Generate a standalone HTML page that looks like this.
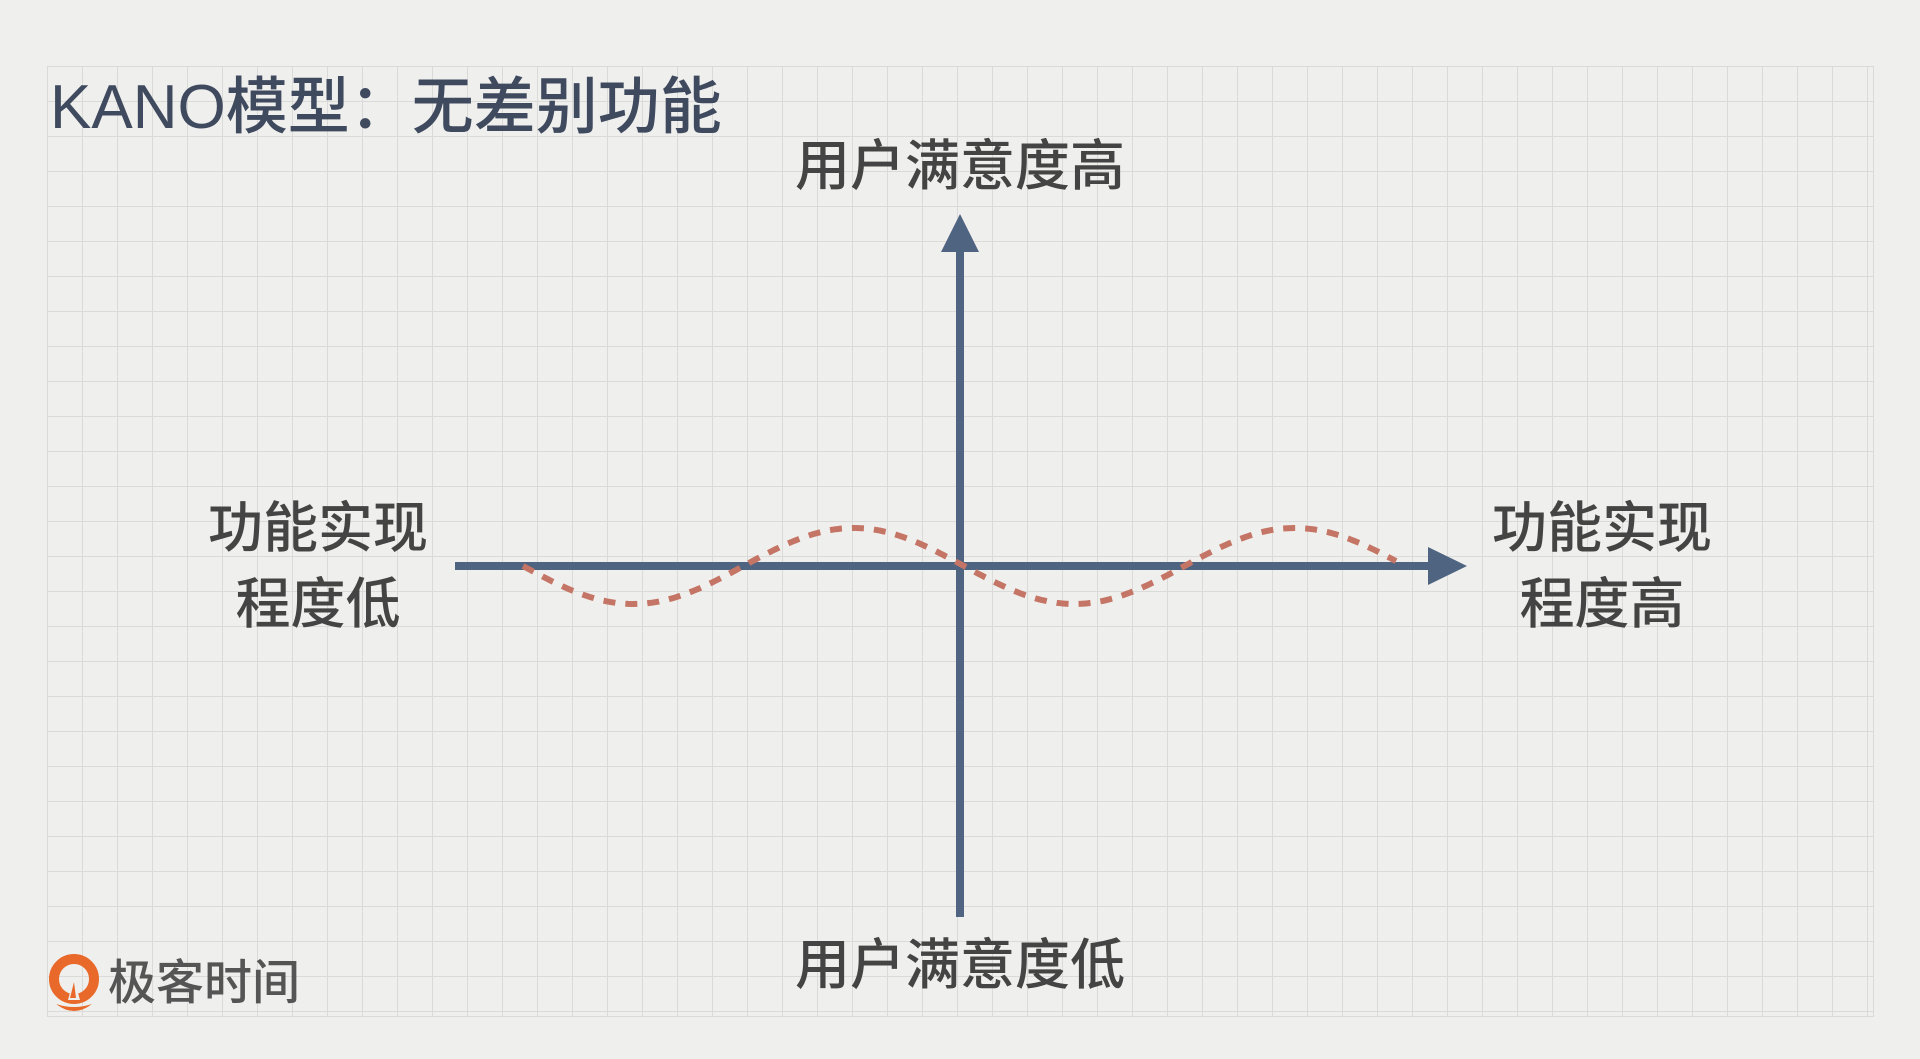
<!DOCTYPE html>
<html><head><meta charset="utf-8"><style>
body{margin:0;width:1920px;height:1059px;background:#efefed;overflow:hidden;position:relative;font-family:"Liberation Sans","Noto Sans CJK SC",sans-serif;}
.grid{position:absolute;left:47px;top:66px;width:1826px;height:950px;
background-image:linear-gradient(to right,#dadad8 1px,transparent 1px),linear-gradient(to bottom,#dadad8 1px,transparent 1px);background-size:35px 35px;border-right:1px solid #dadad8;border-bottom:1px solid #dadad8;}
.t{position:absolute;color:#3f4a5f;white-space:nowrap;}
.lbl{position:absolute;color:#444;font-size:55px;font-weight:500;text-align:center;line-height:76px;white-space:nowrap;}
</style></head><body>
<div class="grid"></div>
<div class="t" style="left:50px;top:66px;font-size:62px;line-height:84px;font-weight:500;">KANO模型：无差别功能</div>
<div class="lbl" style="left:760px;width:400px;top:128px;">用户满意度高</div>
<div class="lbl" style="left:760px;width:400px;top:927px;">用户满意度低</div>
<div class="lbl" style="left:168px;width:300px;top:490px;">功能实现<br>程度低</div>
<div class="lbl" style="left:1452px;width:300px;top:490px;">功能实现<br>程度高</div>
<svg width="1920" height="1059" style="position:absolute;left:0;top:0">
<line x1="960" y1="250" x2="960" y2="917" stroke="#4f6480" stroke-width="8"/>
<polygon points="960,214 941,252 979,252" fill="#4f6480"/>
<line x1="455" y1="566" x2="1432" y2="566" stroke="#4f6480" stroke-width="8"/>
<polygon points="1467,566 1428,547 1428,585" fill="#4f6480"/>
<path id="w" fill="none" stroke="#c57565" stroke-width="6" stroke-dasharray="12 10" d=""/>
</svg>
<script>
var d="";for(var x=523;x<=1396;x+=3){var y=566+38*Math.sin(2*Math.PI*(x-523)/441);d+=(x==523?"M":"L")+x+","+y.toFixed(1);}
document.getElementById("w").setAttribute("d",d);
</script>
<svg style="position:absolute;left:46px;top:952px" width="56" height="64" viewBox="0 0 56 64">
<circle cx="28" cy="27" r="20" fill="none" stroke="#e8692a" stroke-width="10"/>
<polygon points="22,48 28,26 34,48" fill="#efefed"/>
<polygon points="24,46 28,30 30,46" fill="#e8692a"/>
<path d="M10 52q18 14 36 0q-18 6-36 0z" fill="#e8692a"/>
</svg>
<div class="t" style="left:108px;top:954px;font-size:48px;line-height:60px;color:#555;font-weight:500;">极客时间</div>
</body></html>
